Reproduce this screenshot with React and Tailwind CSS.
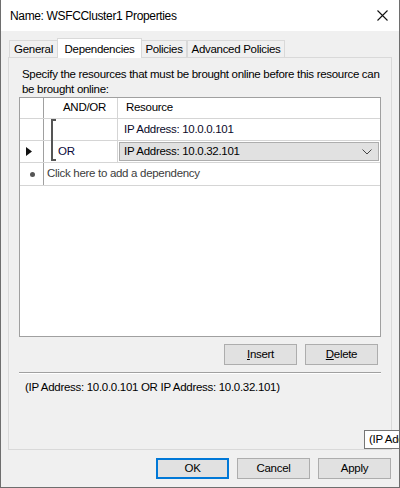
import React from 'react';

const font = { fontFamily: '"Liberation Sans", Arial, sans-serif' };

function Tab({ label, active, w }) {
  if (active) {
    return (
      <div className={'h-[20px] bg-white border border-b-0 border-[#d9d9d9] flex justify-center items-start pt-[2px] relative z-10 -mx-[1px] ' + w}>
        {label}
      </div>
    );
  }
  return (
    <div className={'h-[18px] bg-[#f0f0f0] border border-[#d9d9d9] flex justify-center items-center pt-[1px] ' + w}>
      {label}
    </div>
  );
}

function Btn({ children, primary }) {
  return (
    <div
      className={
        'w-[73px] h-[21px] flex items-center justify-center bg-[#e1e1e1] ' +
        (primary ? 'border-2 border-[#0078d7]' : 'border border-[#adadad]')
      }
    >
      {children}
    </div>
  );
}

export default function App() {
  return (
    <div
      className="w-[400px] h-[488px] flex flex-col relative overflow-hidden border-x border-b border-[#6e6e6e] text-[11.5px] tracking-[-0.3px] text-black"
      style={font}
    >
      {/* title bar */}
      <div className="h-[31px] bg-white flex items-center justify-between pl-[9px] pr-[11px] shrink-0 text-[12px] tracking-[-0.35px]">
        <span>Name: WSFCCluster1 Properties</span>
        <svg width="11" height="11" viewBox="0 0 11 11">
          <path d="M0.5 0.5 L10.5 10.5 M10.5 0.5 L0.5 10.5" stroke="#111" strokeWidth="1.1" />
        </svg>
      </div>

      <div className="flex-1 bg-[#f0f0f0] flex flex-col px-[7px] pt-[7px]">
        {/* tabs */}
        <div className="flex items-end h-[20px] pl-[1px] -mb-[1px]">
          <Tab label="General" w="w-[49px]" />
          <Tab label="Dependencies" active w="w-[85px]" />
          <Tab label="Policies" w="w-[46px]" />
          <Tab label="Advanced Policies" w="w-[98px]" />
        </div>

        {/* tab page */}
        <div className="h-[393px] border border-[#d9d9d9] bg-[#f0f0f0] flex flex-col px-[10px]">
          <div className="pt-[9px] pl-[3px] leading-[15px] h-[39px] whitespace-nowrap">
            Specify the resources that must be brought online before this resource can
            <br />
            be brought online:
          </div>

          {/* grid */}
          <div className="h-[240px] border border-[#a0a0a0] bg-white flex flex-col">
            <div className="flex h-[21px] border-b border-[#d5d5d5]">
              <div className="w-[24px] border-r border-[#a0a0a0]" />
              <div className="w-[74px] border-r border-[#d5d5d5] flex items-center pl-[19px]">AND/OR</div>
              <div className="flex-1 flex items-center pl-[8px]">Resource</div>
            </div>

            <div className="flex h-[22px] border-b border-[#d5d5d5] relative">
              <div className="w-[24px] border-r border-[#a0a0a0]" />
              <div className="w-[74px] border-r border-[#d5d5d5]" />
              <div className="flex-1 flex items-center pl-[6px] text-[#0a0a2a]">IP Address: 10.0.0.101</div>
            </div>

            <div className="flex h-[22px] border-b border-[#d5d5d5]">
              <div className="w-[24px] border-r border-[#a0a0a0] flex items-center pl-[6px]">
                <svg width="6" height="9" viewBox="0 0 6 9">
                  <path d="M0 0 L6 4.5 L0 9 Z" fill="#111" />
                </svg>
              </div>
              <div className="w-[74px] border-r border-[#d5d5d5] flex items-center pl-[14px] text-[#0a0a3a]">OR</div>
              <div className="flex-1 p-[1px] flex">
                <div className="flex-1 bg-[#e1e1e1] border border-[#adadad] flex items-center justify-between pl-[4px] pr-[6px]">
                  <span>IP Address: 10.0.32.101</span>
                  <svg width="10" height="6" viewBox="0 0 10 6">
                    <path d="M0.5 0.5 L5 5 L9.5 0.5" stroke="#444" strokeWidth="1" fill="none" />
                  </svg>
                </div>
              </div>
            </div>

            <div className="flex h-[23px] border-b border-[#d5d5d5]">
              <div className="w-[24px] border-r border-[#a0a0a0] flex items-center justify-center pl-[1px]">
                <div className="w-[5px] h-[5px] rounded-full bg-[#555]" />
              </div>
              <div className="flex-1 flex items-center pl-[3px] text-[#3c3c3c]">Click here to add a dependency</div>
            </div>
          </div>

          {/* bracket over AND/OR column */}
          <div className="absolute left-[50px] top-[119px] w-[5px] h-[42px] border-l-2 border-y-2 border-[#555]" />

          <div className="flex justify-end gap-[8px] pr-[3px] mt-[7px]">
            <Btn><span><u>I</u>nsert</span></Btn>
            <Btn><span><u>D</u>elete</span></Btn>
          </div>

          <div className="mt-[7px] border-t border-[#a0a0a0] border-b border-b-white h-[2px]" />
          <div className="pl-[6px] pt-[5px]">(IP Address: 10.0.0.101 OR IP Address: 10.0.32.101)</div>
        </div>

        {/* dialog buttons */}
        <div className="flex justify-end gap-[8px] mt-[8px] pr-[1px]">
          <Btn primary>OK</Btn>
          <Btn>Cancel</Btn>
          <Btn>Apply</Btn>
        </div>
      </div>

      {/* tooltip */}
      <div className="absolute left-[363px] top-[430px] h-[19px] px-[4px] bg-white border border-[#767676] flex items-center whitespace-nowrap">
        (IP Address: 10.0.0.101 OR IP Address: 10.0.32.101)
      </div>
    </div>
  );
}
